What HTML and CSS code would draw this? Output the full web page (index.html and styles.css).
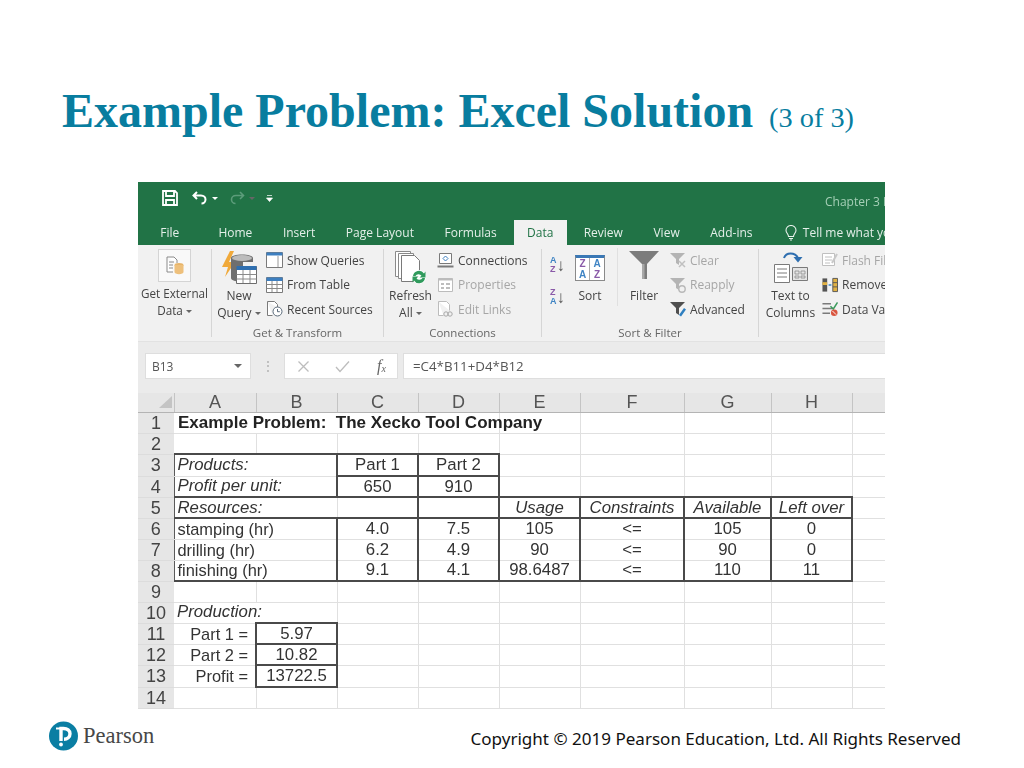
FILE: index.html
```html
<!DOCTYPE html>
<html lang="en">
<head>
<meta charset="utf-8">
<title>Example Problem: Excel Solution</title>
<link rel="stylesheet" href="styles.css">
</head>
<body>
<main class="slide">
  <header class="slide-head">
    <h1 class="title">Example Problem: Excel Solution <span class="title-sub">(3 of 3)</span></h1>
  </header>

  <section class="excel">
    <div class="titlebar">
      <svg class="qa qa-save" width="16" height="16" viewBox="0 0 16 16"><path d="M1 1h12l2 2v12H1z M4 1v5h8V1 M4 15v-5h8v5" fill="none" stroke="#fff" stroke-width="1.8"/></svg>
      <svg class="qa qa-undo" width="16" height="14" viewBox="0 0 16 14"><path d="M5 1 1.500 4.500 5 8M2 4.500h7c3 0 4.500 2 4.500 4s-1.500 4-4 4" fill="none" stroke="#fff" stroke-width="2"/></svg>
      <i class="caret caret-light"></i>
      <svg class="qa qa-redo" width="16" height="14" viewBox="0 0 16 14"><path d="M11 1l3.500 3.500L11 8M14 4.500H7c-3 0-4.500 2-4.500 4s1.500 4 4 4" fill="none" stroke="#5c9c7a" stroke-width="1.600"/></svg>
      <i class="caret caret-dim"></i>
      <svg class="qa qa-more" width="7" height="8" viewBox="0 0 7 8"><path d="M1 1.500h5M0.500 4h6L3.500 7.500z" fill="#fff" stroke="#fff" stroke-width=".7"/></svg>
      <span class="doc-name">Chapter 3 Excel</span>
    </div>

    <nav class="tabs">
      <span class="tab tab-file">File</span>
      <span class="tab tab-home">Home</span>
      <span class="tab">Insert</span>
      <span class="tab">Page Layout</span>
      <span class="tab">Formulas</span>
      <span class="tab tab-active">Data</span>
      <span class="tab">Review</span>
      <span class="tab">View</span>
      <span class="tab">Add-ins</span>
      <svg class="bulb" width="12" height="16" viewBox="0 0 12 16"><path d="M3.500 11.500C3.500 9 1 8 1 5.200a5 4.700 0 0 1 10 0C11 8 8.500 9 8.500 11.500zM4 13.500h4M5 15h2" fill="none" stroke="#e8f2ec" stroke-width="1.100"/></svg>
      <span class="tell">Tell me what you want to do</span>
    </nav>

    <div class="ribbon">
      <div class="group g-external">
        <div class="group-body">
          <div class="large large-external">
            <span class="icon-box">
              <svg width="20" height="22" viewBox="0 0 20 22"><path d="M2 2h7l3 3v3M2 2v15h6" fill="#fff" stroke="#8a8a8a"/><path d="M4 7h5M4 10h4M4 13h4" stroke="#8a8a8a"/><ellipse cx="14" cy="10" rx="4.500" ry="2" fill="#e8b56a"/><path d="M9.500 10v7c0 1.300 2 2.200 4.500 2.200s4.500-.9 4.500-2.200v-7" fill="#eec07c"/></svg>
            </span>
            <span class="label label-external">Get External<br>Data <i class="caret"></i></span>
          </div>
        </div>
        <div class="group-label"></div>
      </div>
      <div class="sep"></div>

      <div class="group g-transform">
        <div class="group-body">
          <div class="large large-query">
            <span class="icon-slot">
              <svg width="36" height="36" viewBox="0 0 36 36"><path d="M9 1 1 17h6l-3 10 10-15H8l5-11z" fill="#f0a93a"/><path d="M10 8v20c0 2 4 3.500 9 3.500h3V12h10V8c0-2-5-3.500-11-3.500S10 6 10 8z" fill="#6f6f6f"/><ellipse cx="21" cy="8" rx="10" ry="3" fill="#bcbcbc"/><path d="M15.500 16.500h20v17h-20z" fill="#fff" stroke="#6d6d6d"/><path d="M15.500 16h20v4h-20z" fill="#2f6fb0"/><path d="M15.500 24.500h20M15.500 29h20M22 20v13M29 20v13" stroke="#8a8a8a"/></svg>
            </span>
            <span class="label">New<br>Query <i class="caret"></i></span>
          </div>
          <div class="small-col">
            <div class="small"><svg width="17" height="16" viewBox="0 0 17 16"><path d="M.5.500h16v15H.500z" fill="#fff" stroke="#7a7a7a"/><path d="M.5.500h16v3H.500z" fill="#3d7fc0"/><path d="M12 4v11" stroke="#9a9a9a"/></svg><span>Show Queries</span></div>
            <div class="small"><svg width="17" height="16" viewBox="0 0 17 16"><path d="M.5.500h16v15H.500z" fill="#fff" stroke="#7a7a7a"/><path d="M.5.500h16v3.500H.500z" fill="#3d7fc0"/><path d="M.5 7.500h16M.5 11.500h16M6 4v11M11 4v11" stroke="#8a8a8a"/></svg><span>From Table</span></div>
            <div class="small"><svg width="17" height="16" viewBox="0 0 17 16"><path d="M1.500.500h7l3 3v3M1.500.500v14h5" fill="#fff" stroke="#7a7a7a"/><circle cx="11.500" cy="10.500" r="4.500" fill="#fff" stroke="#5a6a7a"/><path d="M11.500 8v2.700h2.300" fill="none" stroke="#5a6a7a"/></svg><span>Recent Sources</span></div>
          </div>
        </div>
        <div class="group-label">Get &amp; Transform</div>
      </div>
      <div class="sep"></div>

      <div class="group g-connections">
        <div class="group-body">
          <div class="large large-refresh">
            <span class="icon-slot">
              <svg width="32" height="36" viewBox="0 0 32 36"><path d="M.500 1.500h15v25H.500z" fill="#fff" stroke="#8a8a8a"/><path d="M3.500 3.500h15v25h-15z" fill="#fff" stroke="#8a8a8a"/><path d="M6.500 5.500h13l5 5v21h-18z" fill="#fff" stroke="#7a7a7a"/><circle cx="24" cy="27" r="7" fill="#fff"/><path d="M18 26a6 6 0 0 1 11-2.500l1.500-2v6h-6l2-1.800a3.500 3.500 0 0 0-6 .3zM30 28a6 6 0 0 1-11 2.500l-1.500 2v-6h6l-2 1.800a3.500 3.500 0 0 0 6-.3z" fill="#2f9a5c"/></svg>
            </span>
            <span class="label">Refresh<br>All <i class="caret"></i></span>
          </div>
          <div class="small-col">
            <div class="small"><svg width="17" height="15" viewBox="0 0 17 15"><path d="M2.500.500h12v10h-12z" fill="#fff" stroke="#7a7a7a"/><path d="M.500 13.500h16" stroke="#7a7a7a" stroke-width="2"/><path d="M8.500 3 11 5.500 8.500 8 6 5.500z" fill="none" stroke="#3d7fc0"/></svg><span>Connections</span></div>
            <div class="small small-off"><svg width="17" height="16" viewBox="0 0 17 16"><path d="M1.500 1.500h14v13h-14z" fill="#fff" stroke="#bcbcbc"/><path d="M1.500 1.500h14v2h-14z" fill="#bcbcbc"/><path d="M4 7h3M4 11h3M9 7h4M9 11h4" stroke="#a8a8a8" stroke-width="1.500"/></svg><span>Properties</span></div>
            <div class="small small-off"><svg width="17" height="16" viewBox="0 0 17 16"><path d="M1.500.500h8l3 3v6M1.500.500v14h5" fill="#fff" stroke="#bcbcbc"/><circle cx="9" cy="13" r="2.200" fill="none" stroke="#a8a8a8"/><circle cx="13" cy="13" r="2.200" fill="none" stroke="#a8a8a8"/></svg><span>Edit Links</span></div>
          </div>
        </div>
        <div class="group-label">Connections</div>
      </div>
      <div class="sep"></div>

      <div class="group g-sort">
        <div class="group-body">
          <div class="az-col">
            <div class="az"><span class="az-text"><b class="c-blue">A</b><b class="c-purple">Z</b></span><span class="az-arrow">↓</span></div>
            <div class="az"><span class="az-text"><b class="c-purple">Z</b><b class="c-blue">A</b></span><span class="az-arrow">↓</span></div>
          </div>
          <div class="large large-sort">
            <span class="icon-slot sort-slot">
              <span class="sort-icon"><b class="c-purple">Z</b><b class="c-blue">A</b><b class="c-blue">A</b><b class="c-purple">Z</b></span>
            </span>
            <span class="label">Sort</span>
          </div>
          <div class="inner-sep"></div>
          <div class="large large-filter">
            <span class="icon-slot">
              <svg width="30" height="30" viewBox="0 0 30 30"><path d="M0 1h30L18 14v15h-5V14z" fill="#7c7c7c"/><path d="M13 14h2.500v15H13z" fill="#a8a8a8"/></svg>
            </span>
            <span class="label">Filter</span>
          </div>
          <div class="small-col">
            <div class="small small-off"><svg width="16" height="16" viewBox="0 0 16 16"><path d="M0 1h15L9 7v6L6 11V7z" fill="#b4b4b4"/><path d="M9 9l6 6M15 9l-6 6" stroke="#c0c0c0" stroke-width="1.500"/></svg><span>Clear</span></div>
            <div class="small small-off"><svg width="16" height="16" viewBox="0 0 16 16"><path d="M0 1h15L9 7v6L6 11V7z" fill="#b4b4b4"/><circle cx="12" cy="12" r="3.200" fill="none" stroke="#b8b8b8" stroke-width="1.400"/></svg><span>Reapply</span></div>
            <div class="small"><svg width="16" height="16" viewBox="0 0 16 16"><path d="M0 1h15L9 7v7L6 12V7z" fill="#4f4f4f"/><path d="M9 14l5-7 2 1.500-5 7z" fill="#2f7fc0"/></svg><span>Advanced</span></div>
          </div>
        </div>
        <div class="group-label">Sort &amp; Filter</div>
      </div>
      <div class="sep"></div>

      <div class="group g-tools">
        <div class="group-body">
          <div class="large large-columns">
            <span class="icon-slot">
              <svg width="34" height="34" viewBox="0 0 34 34"><path d="M10 8C12 2 21 2 24 8" fill="none" stroke="#2f6fb0" stroke-width="2"/><path d="M19.500 7h9L24 12.500z" fill="#2f6fb0"/><path d="M.500 14.500h15v18h-15z" fill="#fff" stroke="#7a7a7a"/><path d="M3 19h10M3 23h10M3 27h10" stroke="#7a7a7a"/><path d="M18.500 17.500h15v13h-15z" fill="#e4e4e4" stroke="#7a7a7a"/><path d="M21 21h4v3h-4zM27 21h4v3h-4zM21 26h4v2h-4zM27 26h4v2h-4z" fill="none" stroke="#8a8a8a" stroke-width=".8"/></svg>
            </span>
            <span class="label">Text to<br>Columns</span>
          </div>
          <div class="small-col">
            <div class="small small-off"><svg width="16" height="16" viewBox="0 0 16 16"><path d="M.5 1.500h12v12H.500z" fill="#fff" stroke="#c0c0c0"/><path d="M3 5h7M3 8h7M3 11h5" stroke="#c0c0c0"/><path d="M15 2l-5 9" stroke="#c8c8c8" stroke-width="2"/></svg><span>Flash Fill</span></div>
            <div class="small"><svg width="16" height="16" viewBox="0 0 17 16"><path d="M.5 1h5v14h-5z" fill="#555"/><path d="M.5 5h5v3h-5z" fill="#e2b243"/><path d="M11.500 1h5v14h-5z" fill="#e2b243" stroke="#555"/><path d="M11.500 5.500h5M11.500 10h5" stroke="#555"/><path d="M7 8h3" stroke="#2f7fc0" stroke-width="1.500"/></svg><span>Remove Duplicates</span></div>
            <div class="small"><svg width="16" height="16" viewBox="0 0 17 16"><path d="M.5 2.500h9M.5 7.500h11M.5 12.500h8" stroke="#7a7a7a" stroke-width="1.500"/><path d="M9 5l3 3 4.500-7" fill="none" stroke="#3b9a5c" stroke-width="1.600"/><circle cx="13" cy="12" r="3.500" fill="#d9553f"/><path d="M11 10l4 4" stroke="#fff"/></svg><span>Data Validation</span></div>
          </div>
        </div>
        <div class="group-label"></div>
      </div>
    </div>

    <div class="formula-bar">
      <div class="name-box"><span>B13</span><i class="caret caret-dark"></i></div>
      <div class="grip">⋮</div>
      <div class="fn-box">
        <svg width="13" height="13" viewBox="0 0 13 13"><path d="M1.500 1.500l10 10M11.500 1.500l-10 10" stroke="#bdbdbd" stroke-width="1.300"/></svg>
        <svg width="15" height="13" viewBox="0 0 15 13"><path d="M1 7l4 4.500L14 1.500" fill="none" stroke="#bdbdbd" stroke-width="1.300"/></svg>
        <span class="fx">f<sub>x</sub></span>
      </div>
      <div class="formula">=C4*B11+D4*B12</div>
    </div>

    <table class="sheet">
      <colgroup>
        <col class="c-head"><col class="c-a"><col class="c-b"><col class="c-c"><col class="c-d"><col class="c-e"><col class="c-f"><col class="c-g"><col class="c-h"><col class="c-i">
      </colgroup>
      <thead>
        <tr>
          <th class="corner"><svg width="13" height="12" viewBox="0 0 13 12"><path d="M13 0v12H0z" fill="#c4c4c4"/></svg></th>
          <th>A</th><th>B</th><th>C</th><th>D</th><th>E</th><th>F</th><th>G</th><th>H</th><th class="blank"></th>
        </tr>
      </thead>
      <tbody>
        <tr><th>1</th><td colspan="4" class="bold">Example Problem:&nbsp; The Xecko Tool Company</td><td></td><td></td><td></td><td></td><td></td></tr>
        <tr><th>2</th><td></td><td></td><td></td><td></td><td></td><td></td><td></td><td></td><td></td></tr>
        <tr class="tall"><th>3</th><td colspan="2" class="em bt bl">Products:</td><td class="ctr bt bl br bb">Part 1</td><td class="ctr bt br bb">Part 2</td><td></td><td></td><td></td><td></td><td></td></tr>
        <tr><th>4</th><td colspan="2" class="em bl bb">Profit per unit:</td><td class="ctr bl br bb">650</td><td class="ctr br bb">910</td><td class="bb"></td><td class="bb"></td><td class="bb"></td><td class="bb"></td><td></td></tr>
        <tr><th>5</th><td colspan="2" class="em bl bb">Resources:</td><td class="bl br bb"></td><td class="br bb"></td><td class="ctr em br bb">Usage</td><td class="ctr em br bb">Constraints</td><td class="ctr em br bb">Available</td><td class="ctr em br bb">Left over</td><td></td></tr>
        <tr><th>6</th><td colspan="2" class="lbl bl">stamping (hr)</td><td class="ctr bl br">4.0</td><td class="ctr br">7.5</td><td class="ctr br">105</td><td class="ctr br">&lt;=</td><td class="ctr br">105</td><td class="ctr br">0</td><td></td></tr>
        <tr><th>7</th><td colspan="2" class="lbl bl">drilling (hr)</td><td class="ctr bl br">6.2</td><td class="ctr br">4.9</td><td class="ctr br">90</td><td class="ctr br">&lt;=</td><td class="ctr br">90</td><td class="ctr br">0</td><td></td></tr>
        <tr><th>8</th><td colspan="2" class="lbl bl bb">finishing (hr)</td><td class="ctr bl br bb">9.1</td><td class="ctr br bb">4.1</td><td class="ctr br bb">98.6487</td><td class="ctr br bb">&lt;=</td><td class="ctr br bb">110</td><td class="ctr br bb">11</td><td></td></tr>
        <tr><th>9</th><td></td><td></td><td></td><td></td><td></td><td></td><td></td><td></td><td></td></tr>
        <tr><th>10</th><td colspan="2" class="em">Production:</td><td></td><td></td><td></td><td></td><td></td><td></td><td></td></tr>
        <tr><th>11</th><td class="rgt">Part 1 =</td><td class="ctr box">5.97</td><td></td><td></td><td></td><td></td><td></td><td></td><td></td></tr>
        <tr><th>12</th><td class="rgt">Part 2 =</td><td class="ctr box">10.82</td><td></td><td></td><td></td><td></td><td></td><td></td><td></td></tr>
        <tr class="tall"><th>13</th><td class="rgt">Profit =</td><td class="ctr box">13722.5</td><td></td><td></td><td></td><td></td><td></td><td></td><td></td></tr>
        <tr><th>14</th><td></td><td></td><td></td><td></td><td></td><td></td><td></td><td></td><td></td></tr>
      </tbody>
    </table>
  </section>

  <footer class="slide-foot">
    <div class="brand">
      <svg width="29" height="32" viewBox="0 0 29 32"><circle cx="14.500" cy="16" r="14.500" fill="#0a7ea3"/><path d="M12 21V8.500h2.500c3.800 0 6.500 2 6.500 5.300 0 3.300-2.700 5.400-6 5.400" fill="none" stroke="#fff" stroke-width="3.400"/><path d="M7 8.500h5" stroke="#fff" stroke-width="2"/><circle cx="12" cy="24.500" r="1.900" fill="#fff"/></svg>
      <span class="brand-name">Pearson</span>
    </div>
    <p class="copyright">Copyright © 2019 Pearson Education, Ltd. All Rights Reserved</p>
  </footer>
</main>
</body>
</html>
```

FILE: styles.css
```css
* { box-sizing: border-box; }
html, body { margin: 0; padding: 0; background: #fff; }
.slide { width: 1024px; height: 768px; overflow: hidden; display: flex; flex-direction: column; }

/* Slide head */
.slide-head { height: 182px; padding: 83px 0 0 62px; }
.title { margin: 0; font: 700 48px/56px "Liberation Serif", serif; color: #087d9f; white-space: nowrap; }
.title-sub { font-weight: 400; font-size: 28.300px; margin-left: 4px; }

/* Excel picture */
.excel { width: 747px; height: 527px; margin-left: 138px; overflow: hidden; display: flex; flex-direction: column; font-family: "Open Sans", sans-serif; font-size: 12px; color: #444; filter: blur(.35px); flex: none; }

.titlebar { height: 38px; background: #217346; display: flex; align-items: center; padding: 0 0 6px 24px; flex: none; }
.qa-undo { margin-left: 14px; }
.caret-light { margin-left: 4px; }
.qa-redo { margin-left: 11px; }
.caret-dim { margin-left: 4px; border-top-color: #5c9c7a; }
.qa-more { margin-left: 11px; }
.doc-name { margin: 7px 0 0 auto; width: 60px; white-space: nowrap; overflow: hidden; color: #a5cfb6; font-size: 12px; }

.tabs { height: 25px; background: #217346; display: flex; align-items: center; color: #e4efe9; flex: none; white-space: nowrap; overflow: hidden; padding-left: 7px; }
.tab { padding: 0 15.300px; line-height: 25px; }
.tab-home { margin-left: 8.500px; }
.tab-active { background: #f1f1f1; color: #217346; padding: 0 13.500px; margin: 0 1.500px; }
.bulb { margin-left: 17px; flex: none; }
.tell { margin-left: 6px; }

.caret { display: inline-block; width: 0; height: 0; border: 3px solid transparent; border-top: 3.500px solid #666; border-bottom: 0; vertical-align: middle; }
.caret-light { border-top-color: #fff; }
.caret-dark { border-top-color: #666; border-width: 4px 4px 0; }

/* Ribbon */
.ribbon { height: 97px; background: #f1f1f1; display: flex; flex: none; border-bottom: 1px solid #e2e2e2; }
.sep { width: 1px; background: #d6d6d6; margin: 4px 0 4px; flex: none; }
.group { display: flex; flex-direction: column; flex: none; }
.g-external { width: 73px; }
.g-transform { width: 171px; }
.g-connections { width: 157px; }
.g-sort { width: 216px; }
.g-tools { flex: 1; overflow: hidden; }
.group-body { flex: 1; display: flex; padding-top: 3px; min-height: 0; }
.group-label { height: 17px; flex: none; text-align: center; font-size: 11.500px; line-height: 17px; color: #666; white-space: nowrap; }

.large { display: flex; flex-direction: column; align-items: center; flex: none; }
.icon-slot { height: 39px; display: flex; align-items: flex-start; justify-content: center; padding-top: 2px; }
.label { text-align: center; line-height: 17px; white-space: nowrap; }
.label-external { font-size: 11.700px; }
.large-external { width: 73px; padding-top: 1px; }
.icon-box { width: 33px; height: 33px; background: #f9f9f9; border: 1px solid #d4d4d4; display: flex; align-items: center; justify-content: center; margin: 0 0 3px; }
.large-query { width: 54px; }
.large-refresh { width: 53px; }
.large-sort { width: 36px; margin-left: 7px; }
.large-filter { width: 52px; }
.large-columns { width: 63px; }
.sort-slot { padding-top: 7px; }
.sort-icon { width: 30px; height: 26px; display: grid; grid-template-columns: 1fr 1fr; border: 1px solid #8a8a8a; border-top: 3px solid #3a78b5; background: #fff; font: 700 10px/11px "Liberation Sans", sans-serif; text-align: center; }
.sort-icon b:nth-child(odd) { border-right: 1px solid #aaa; }

.az-col { width: 15px; margin-left: 8px; flex: none; display: flex; flex-direction: column; gap: 14px; padding-top: 8px; }
.az { display: flex; align-items: center; height: 18px; }
.az-text { display: flex; flex-direction: column; font: 700 9px/9px "Liberation Sans", sans-serif; width: 8px; }
.az-text b { display: block; }
.az-arrow { font: 400 17px/17px "Liberation Sans", sans-serif; color: #555; }
.c-blue { color: #3f84c4; font-weight: 700; }
.c-purple { color: #8a5aa8; font-weight: 700; }
.inner-sep { width: 1px; height: 58px; background: #e0e0e0; margin-left: 9px; flex: none; }

.small-col { display: flex; flex-direction: column; flex: none; }
.small { height: 24.500px; display: flex; align-items: center; gap: 4px; white-space: nowrap; }
.small svg { flex: none; }
.small-off { color: #a6a6a6; }

/* Formula bar */
.formula-bar { height: 51px; background: #ebebeb; padding-top: 11px; display: flex; align-items: flex-start; flex: none; }
.name-box { width: 106px; height: 26px; margin-left: 7px; background: #fff; border: 1px solid #dedede; display: flex; align-items: center; justify-content: space-between; padding: 0 8px 0 6px; color: #555; }
.grip { width: 33px; text-align: center; color: #aaa; line-height: 26px; }
.fn-box { width: 114px; height: 26px; background: #fff; border: 1px solid #dedede; display: flex; align-items: center; justify-content: space-between; padding: 0 11px 0 12px; }
.fn-box svg:nth-child(2) { margin-right: 3px; }
.fx { font: italic 400 16px/1 "Liberation Serif", serif; color: #666; }
.fx sub { font-size: 10px; vertical-align: -1px; }
.formula { flex: 1; height: 26px; margin-left: 5px; background: #fff; border: 1px solid #dedede; border-right: 0; padding-left: 9px; font-size: 13.300px; line-height: 24px; color: #555; }

/* Worksheet */
.sheet { width: 747px; table-layout: fixed; border-collapse: collapse; font: 400 16.800px/16px "Liberation Sans", sans-serif; color: #333; background: #fff; flex: none; }
.c-head { width: 36px; }
.c-a { width: 82px; }
.c-b { width: 81px; }
.c-c { width: 81px; }
.c-d { width: 81px; }
.c-e { width: 81px; }
.c-f { width: 104px; }
.c-g { width: 87px; }
.c-h { width: 81px; }
.c-i { width: 33px; }
.sheet thead th { height: 19px; padding: 0; background: #e6e6e6; font-size: 18px; font-weight: 400; line-height: 18px; color: #555; border-right: 1px solid #c4c4c4; border-bottom: 1px solid #b4b4b4; }
.sheet thead th.blank { border-right: 0; }
.sheet thead th.corner { text-align: right; padding-right: 2px; }
.sheet thead th.corner svg { display: block; margin-left: auto; }
.sheet tbody th { height: 21px; padding: 0; background: #e6e6e6; font-size: 18px; font-weight: 400; color: #444; text-align: center; border-bottom: 1px solid #dcdcdc; }
.sheet tbody tr.tall th { height: 22px; }
.sheet td { padding: 0 0 0 3px; border-right: 1px solid #e0e0e0; border-bottom: 1px solid #e0e0e0; white-space: nowrap; overflow: visible; }
.sheet td.bold { font-size: 17px; font-weight: 700; color: #222; padding-left: 4px; }
.sheet td.em { font-style: italic; }
.sheet td.lbl { font-size: 16.400px; }
.sheet td.ctr { text-align: center; padding: 0; }
.sheet td.rgt { font-size: 16.400px; text-align: right; padding: 0 7px 0 0; }
.sheet td.bt { border-top: 2px solid #4a4a4a; }
.sheet td.bb { border-bottom: 2px solid #4a4a4a; }
.sheet td.bl { border-left: 1px solid #5a5a5a; }
.sheet td.br { border-right: 2px solid #4a4a4a; }
.sheet td.ctr.bl { border-left: 2px solid #4a4a4a; }
.sheet td.box { border: 2px solid #4a4a4a; }

/* Footer */
.slide-foot { flex: 1; display: flex; align-items: center; justify-content: space-between; padding: 0 63px 0 49px; }
.brand { display: flex; align-items: center; gap: 5px; margin-top: -5px; }
.brand-name { font: 400 22.500px/1 "Liberation Serif", serif; color: #474747; padding-top: 1px; }
.copyright { margin: 0; font: 400 17.050px/1 "Noto Sans", sans-serif; color: #111; white-space: nowrap; }
```
